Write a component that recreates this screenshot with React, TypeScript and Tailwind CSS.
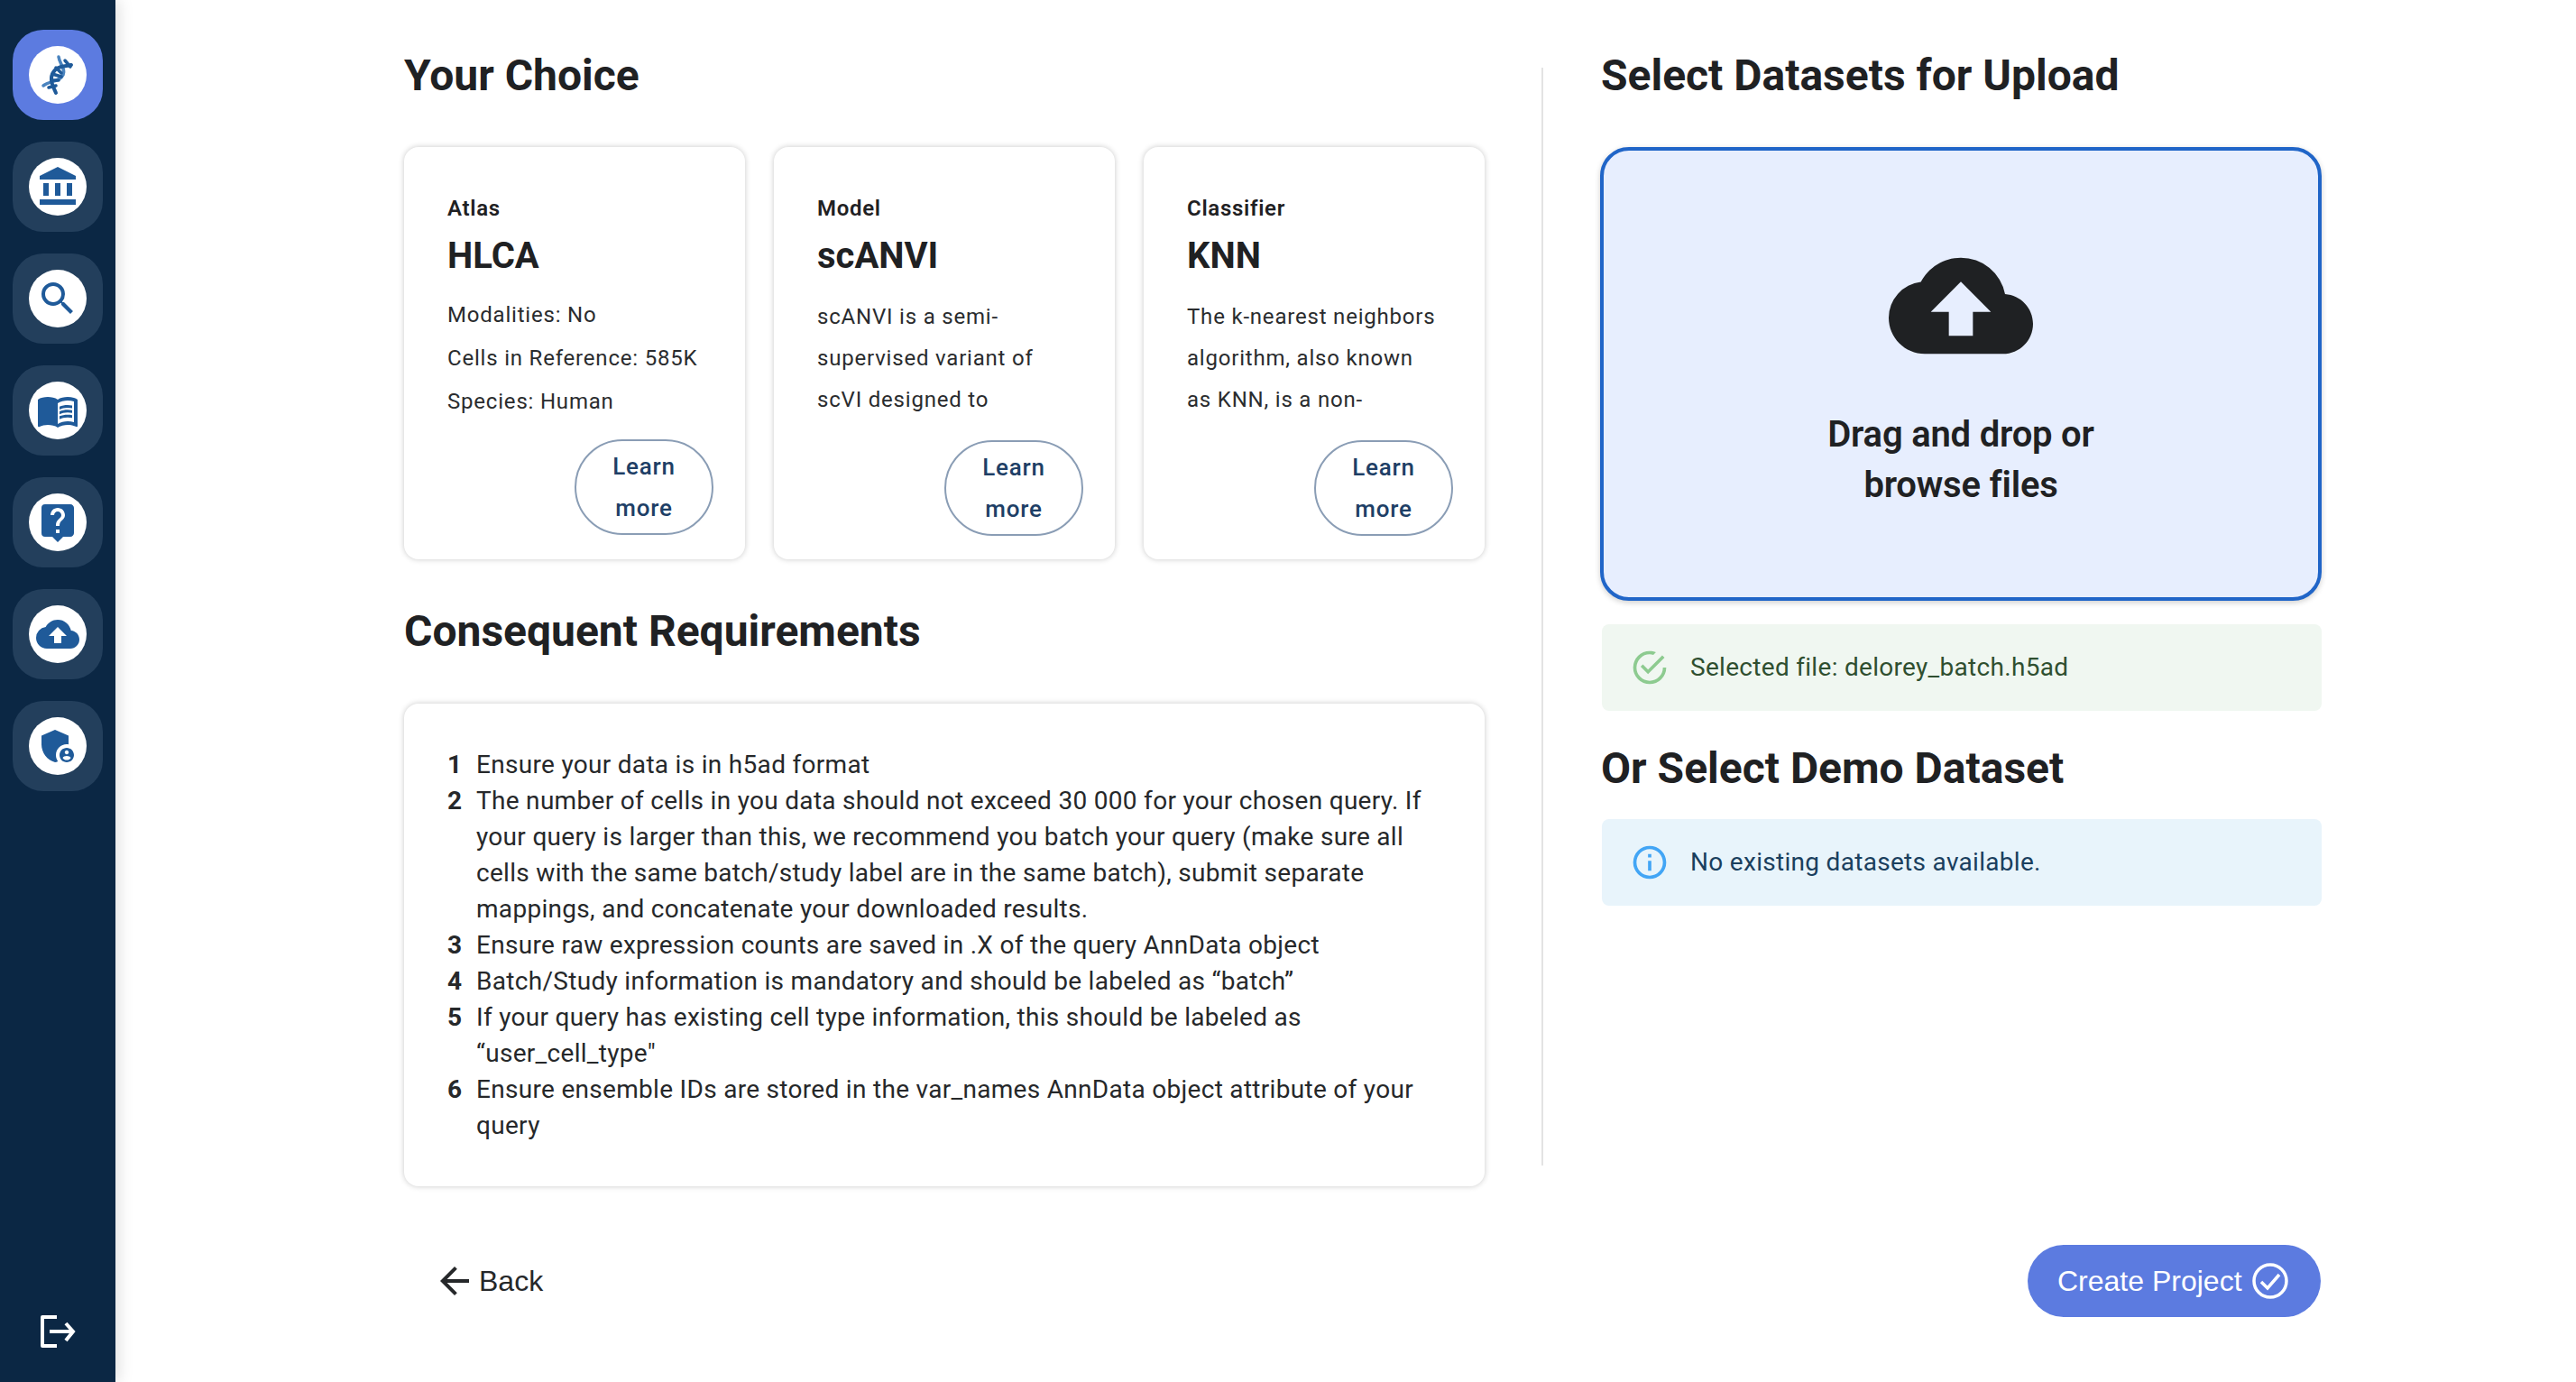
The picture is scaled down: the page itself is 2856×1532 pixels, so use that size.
import React from 'react';
import { MdAccountBalance, MdSearch, MdLiveHelp, MdCloudUpload, MdAdminPanelSettings, MdArrowBack, MdMenuBook } from 'react-icons/md';

const SuccessIcon = ({ className }: { className?: string }) => (
  <svg viewBox="0 0 24 24" fill="currentColor" className={className}>
    <path d="M20,12A8,8 0 0,1 12,20A8,8 0 0,1 4,12A8,8 0 0,1 12,4C12.76,4 13.5,4.11 14.2,4.31L15.77,2.74C14.61,2.26 13.34,2 12,2A10,10 0 0,0 2,12A10,10 0 0,0 12,22A10,10 0 0,0 22,12M7.91,10.08L6.5,11.5L11,16L21,6L19.59,4.58L11,13.17L7.91,10.08Z" />
  </svg>
);

const InfoIcon = ({ className }: { className?: string }) => (
  <svg viewBox="0 0 24 24" fill="currentColor" className={className}>
    <path d="M11,9H13V7H11M12,20C7.59,20 4,16.41 4,12C4,7.59 7.59,4 12,4C16.41,4 20,7.59 20,12C20,16.41 16.41,20 12,20M12,2A10,10 0 0,0 2,12A10,10 0 0,0 12,22A10,10 0 0,0 22,12A10,10 0 0,0 12,2M11,17H13V11H11V17Z" />
  </svg>
);

const DnaIcon = () => (
  <svg viewBox="0 0 64 64" className="w-16 h-16" fill="none" strokeLinecap="round">
    <path d="M33 12C34 20 41 25 38 32C34 40 24 38 16 44" stroke="#4a84bf" strokeWidth="3.5" />
    <path d="M47 21C38 23 30 22 26 31C23 38 27 45 30 52" stroke="#1f5a99" strokeWidth="4" />
    <path d="M40 16L46 23M30 24L36 30M26 31L36 34M26 38L33 38M22 46L30 44" stroke="#1f5a99" strokeWidth="3.5" />
  </svg>
);

const LogoutIcon = () => (
  <svg viewBox="0 0 40 36" className="w-10 h-9" fill="none" stroke="white" strokeWidth="4">
    <path d="M19 2H3V34H19" strokeLinejoin="round" />
    <path d="M11 18H37M29 9L37 18L29 28" />
  </svg>
);

const navIcons = [
  { icon: <DnaIcon />, active: true },
  { icon: <MdAccountBalance className="w-12 h-12 text-[#1f5a99]" /> },
  { icon: <MdSearch className="w-12 h-12 text-[#1f5a99]" /> },
  { icon: <MdMenuBook className="w-12 h-12 text-[#1f5a99]" /> },
  { icon: <MdLiveHelp className="w-12 h-12 text-[#1f5a99]" /> },
  { icon: <MdCloudUpload className="w-12 h-12 text-[#1f5a99]" /> },
  { icon: <MdAdminPanelSettings className="w-12 h-12 text-[#1f5a99]" /> },
];

// the atlas card lists facts, the other two a clipped description, with tighter lines
const cards = [
  { label: 'Atlas', title: 'HLCA', facts: true, lines: ['Modalities: No', 'Cells in Reference: 585K', 'Species: Human'] },
  { label: 'Model', title: 'scANVI', facts: false, lines: ['scANVI is a semi-', 'supervised variant of', 'scVI designed to'] },
  { label: 'Classifier', title: 'KNN', facts: false, lines: ['The k-nearest neighbors', 'algorithm, also known', 'as KNN, is a non-'] },
];

const requirements = [
  'Ensure your data is in h5ad format',
  'The number of cells in you data should not exceed 30 000 for your chosen query. If your query is larger than this, we recommend you batch your query (make sure all cells with the same batch/study label are in the same batch), submit separate mappings, and concatenate your downloaded results.',
  'Ensure raw expression counts are saved in .X of the query AnnData object',
  'Batch/Study information is mandatory and should be labeled as “batch”',
  'If your query has existing cell type information, this should be labeled as “user_cell_type"',
  'Ensure ensemble IDs are stored in the var_names AnnData object attribute of your query',
];

function Card({ label, title, lines, facts }: { label: string; title: string; lines: string[]; facts: boolean }) {
  return (
    <div className="w-[378px] h-[457px] rounded-2xl bg-white pl-[48px] pr-[35px] pt-[52px] shadow-[0_0_6px_rgba(0,0,0,0.22)] flex flex-col">
      <div className="text-[24px] leading-[32px] font-semibold tracking-[0.7px] text-[#1f2123]">{label}</div>
      <div className="mt-[11px] text-[40px] leading-[52px] font-bold text-[#1f2123]">{title}</div>
      <div className={`flex flex-col text-[24px] tracking-[0.8px] text-[#2a2c2e] ${facts ? 'mt-[15px] leading-[48px]' : 'mt-[18px] leading-[46px]'}`}>
        {lines.map(line => (
          <div key={line} className="whitespace-nowrap">{line}</div>
        ))}
      </div>
      <div className="flex justify-end">
        <button className={`w-[154px] h-[106px] rounded-[53px] border-2 border-[#8a9db5] px-[30px] text-[26px] leading-[46px] font-medium tracking-[0.8px] text-[#1e3f66] ${facts ? 'mt-[18px]' : 'mt-[22px]'}`}>
          Learn more
        </button>
      </div>
    </div>
  );
}

export default function App() {
  return (
    <div className="flex h-[1532px] bg-white font-['Roboto',sans-serif] overflow-hidden">
      <aside className="w-[128px] shrink-0 bg-[#0b2744] flex flex-col items-center pt-[33px] pb-[38px] shadow-[4px_0_16px_rgba(0,0,0,0.12)]">
        <nav className="flex flex-col gap-[24px]">
          {navIcons.map((item, i) => (
            <div
              key={i}
              className={`w-[100px] h-[100px] rounded-[34px] flex items-center justify-center ${item.active ? 'bg-[#5c7be0]' : 'bg-[#233f5c]'}`}
            >
              <div className="w-16 h-16 rounded-full bg-white flex items-center justify-center">{item.icon}</div>
            </div>
          ))}
        </nav>
        <div className="mt-auto">
          <LogoutIcon />
        </div>
      </aside>

      <main className="flex-1 pl-[320px] flex flex-col">
        <div className="flex">
          <section className="w-[1198px] shrink-0 pt-[55px]">
            <h2 className="text-[48px] leading-[58px] font-bold text-[#1f2123]">Your Choice</h2>
            <div className="mt-[50px] flex justify-between">
              {cards.map(c => (
                <Card key={c.label} {...c} />
              ))}
            </div>
            <h2 className="mt-[51px] text-[48px] leading-[58px] font-bold text-[#1f2123]">Consequent Requirements</h2>
            <div className="mt-[51px] h-[535px] rounded-2xl bg-white pl-[48px] pr-[60px] pt-[48px] shadow-[0_0_6px_rgba(0,0,0,0.22)]">
              <ol className="flex flex-col text-[28px] leading-[40px] tracking-[0.3px] text-[#26282a]">
                {requirements.map((r, i) => (
                  <li key={i} className="flex">
                    <span className="w-[32px] shrink-0 font-bold">{i + 1}</span>
                    <span>{r}</span>
                  </li>
                ))}
              </ol>
            </div>
          </section>

          <div className="ml-[63px] mt-[75px] w-[2px] h-[1217px] bg-[#e3e3e3]" />

          <section className="ml-[63px] w-[800px] shrink-0 pt-[55px]">
            <h2 className="ml-[1px] text-[48px] leading-[58px] font-bold text-[#1f2123]">Select Datasets for Upload</h2>
            <div className="mt-[50px] h-[503px] rounded-[32px] border-4 border-[#2065c8] bg-[#e7eefe] flex flex-col items-center pt-[119px] shadow-[0_2px_6px_rgba(0,0,0,0.2)]">
              <MdCloudUpload className="w-40 h-40 text-[#1f2123] -my-[27px]" />
              <div className="mt-[62px] text-center text-[40px] leading-[56px] font-semibold tracking-[-0.2px] text-[#1f2123]">
                Drag and drop or
                <br />
                browse files
              </div>
            </div>
            <div className="mt-[26px] ml-[2px] h-[96px] rounded-lg bg-[#f0f7f1] flex items-center pl-[31px] text-[28px] tracking-[0.3px] text-[#2f4f30]">
              <SuccessIcon className="w-11 h-11 text-[#4caf50] opacity-60" />
              <span className="ml-[23px]">Selected file: delorey_batch.h5ad</span>
            </div>
            <h2 className="ml-[1px] mt-[35px] text-[48px] leading-[58px] font-bold text-[#1f2123]">Or Select Demo Dataset</h2>
            <div className="mt-[27px] ml-[2px] h-[96px] rounded-lg bg-[#e8f4fb] flex items-center pl-[31px] text-[28px] tracking-[0.3px] text-[#1a3f5e]">
              <InfoIcon className="w-11 h-11 text-[#42a5f5]" />
              <span className="ml-[23px]">No existing datasets available.</span>
            </div>
          </section>
        </div>

        <footer className="mt-[65px] w-[2125px] flex items-center justify-between font-['Liberation_Sans',sans-serif]">
          <button className="ml-[32px] flex items-center text-[32px] text-[#26282a]">
            <MdArrowBack className="w-12 h-12" />
            <span className="ml-[3px]">Back</span>
          </button>
          <button className="h-[80px] w-[325px] rounded-[40px] bg-[#5c7be0] flex items-center pl-[33px] text-[32px] text-white">
            Create Project
            <svg viewBox="0 0 40 40" className="ml-[11px] w-10 h-10" fill="none" stroke="white" strokeWidth="3.5">
              <circle cx="20" cy="20" r="18" />
              <path d="M10 21L17 28L30 13" />
            </svg>
          </button>
        </footer>
      </main>
    </div>
  );
}
